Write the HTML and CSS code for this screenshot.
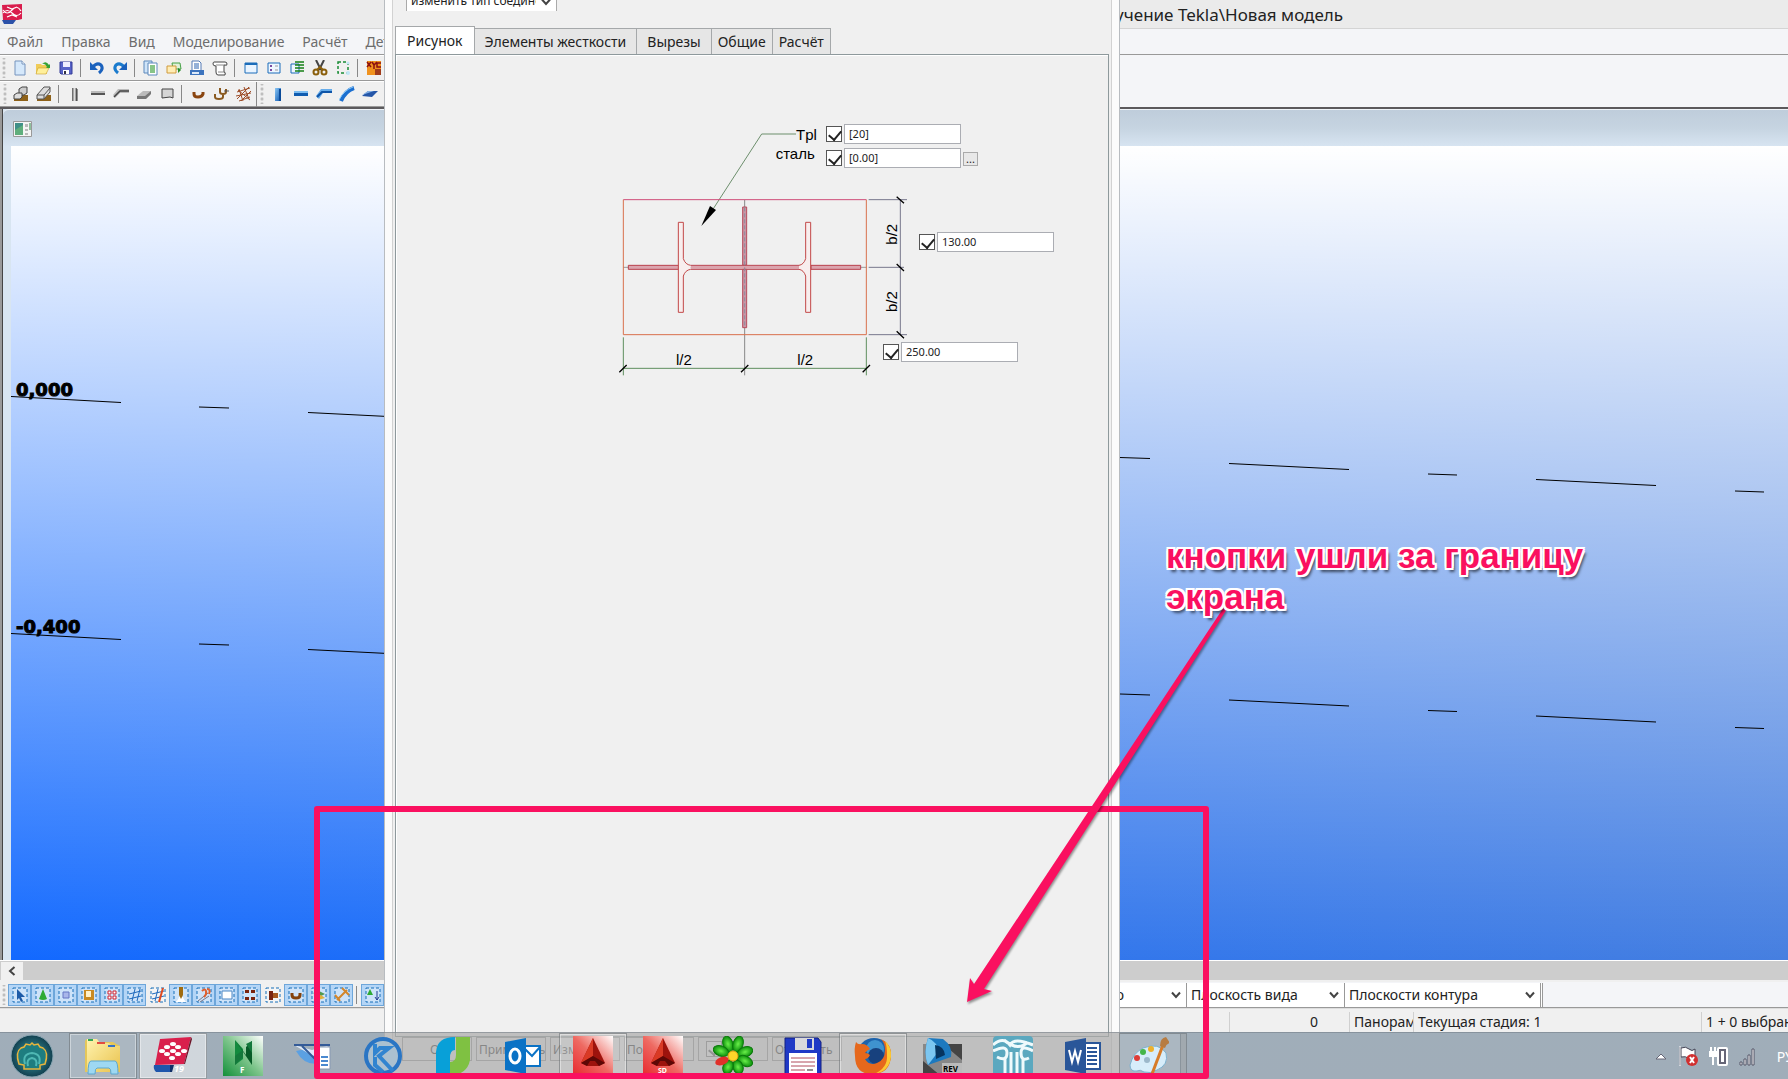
FILE: index.html
```html
<!DOCTYPE html>
<html lang="ru">
<head>
<meta charset="utf-8">
<title>Tekla Structures</title>
<link rel="stylesheet" href="styles.css">
</head>
<body>
<svg class="defs" aria-hidden="true">
  <defs>
    <linearGradient id="steel" x1="0" y1="0" x2="1" y2="0"><stop offset="0" stop-color="#555"/><stop offset=".5" stop-color="#ddd"/><stop offset="1" stop-color="#555"/></linearGradient>
    <linearGradient id="blue" x1="0" y1="0" x2="1" y2="1"><stop offset="0" stop-color="#8cc8f5"/><stop offset="1" stop-color="#0a55b0"/></linearGradient>
    <linearGradient id="red" x1="0" y1="1" x2="1" y2="0"><stop offset="0" stop-color="#e8282d"/><stop offset=".5" stop-color="#ee6a62"/><stop offset="1" stop-color="#fff"/></linearGradient>
    <linearGradient id="green" x1="0" y1="1" x2="1" y2="0"><stop offset="0" stop-color="#12903a"/><stop offset=".5" stop-color="#7cc48a"/><stop offset="1" stop-color="#fff"/></linearGradient>
    <linearGradient id="folder" x1="0" y1="0" x2="1" y2="1"><stop offset="0" stop-color="#fff3ae"/><stop offset="1" stop-color="#e9c24d"/></linearGradient>
    <radialGradient id="teal"><stop offset="0" stop-color="#3ba5ac"/><stop offset="1" stop-color="#123f4f"/></radialGradient>
    <radialGradient id="petal"><stop offset="0" stop-color="#6af04a"/><stop offset="1" stop-color="#0c8f0c"/></radialGradient>
    <symbol id="box" viewBox="0 0 16 16"><rect x="1" y="1" width="14" height="14" fill="#fff" fill-opacity=".35" stroke="#176eb8" stroke-dasharray="3 2"/></symbol>
    <symbol id="chev" viewBox="0 0 10 8"><path d="M1 1.500 5 6 9 1.500" fill="none" stroke="#444" stroke-width="2"/></symbol>
  </defs>
</svg>

<main class="app">
  <header class="titlebar">
    <svg class="logo" viewBox="0 0 20 20"><path d="M0 1 20 0v15l-4 1H1z" fill="#d91c4c"/><path d="M0 16h14l-3 4H2z" fill="#2b51a8"/><path d="M1 9q4-5 9 0t9 0M1 6q4 6 9 0t9 1M5 3l5 2 5-2M5 13l5-2 5 2" fill="none" stroke="#fff" stroke-width="1.200"/></svg>
    <h1>обучение Tekla\Новая модель</h1>
  </header>
  <nav class="menubar">
    <a href="#">Файл</a><a href="#">Правка</a><a href="#">Вид</a><a href="#">Моделирование</a><a href="#">Расчёт</a><a href="#">Детализация</a>
  </nav>

  <div class="toolbars">
    <div class="toolbar">
      <i class="grip"></i>
      <button aria-label="Новый"><svg viewBox="0 0 16 16"><path d="M3 1h7l3 3v11H3z" fill="#d5e8fb" stroke="#7794bd"/><path d="M10 1v3h3" fill="#fff" stroke="#7794bd"/></svg></button>
      <button aria-label="Открыть"><svg viewBox="0 0 16 16"><path d="M1 4h5l1 1h5v9H1z" fill="#f0cc58"/><path d="M3 8h11l-3 6H1z" fill="#fff09a" stroke="#caa030" stroke-width=".6"/><path d="M7 4q4-4 7 1l1-1v4h-4l1-1q-2-4-5-3z" fill="#35a135"/></svg></button>
      <button aria-label="Сохранить"><svg viewBox="0 0 16 16"><path d="M2 2h12v12H3l-1-1z" fill="#5763c8" stroke="#343d98"/><path d="M5 2h7v5H5z" fill="#eef"/><path d="M5 10h6v4H5z" fill="#fff"/><path d="M6 11h2v3H6z" fill="#334"/></svg></button>
      <i class="sep"></i>
      <button aria-label="Отменить"><svg viewBox="0 0 16 16"><path d="M4 7q4-5 8-2 3 4-2 8" fill="none" stroke="#1b62bd" stroke-width="3"/><path d="M1 2v8h8z" fill="#1b62bd"/></svg></button>
      <button aria-label="Вернуть"><svg viewBox="0 0 16 16"><path d="M12 7q-4-5-8-2-3 4 2 8" fill="none" stroke="#1b7bcd" stroke-width="3"/><path d="M15 2v8H7z" fill="#1b62bd"/></svg></button>
      <i class="sep"></i>
      <button aria-label="Отчёт"><svg viewBox="0 0 16 16"><path d="M1 1h8v12H1z" fill="#cfe4f8" stroke="#5d88bb"/><path d="M5 3h9v12H5z" fill="#fff" stroke="#5d88bb"/><path d="M7 6h5M7 8h5M7 10h5M7 12h5" stroke="#118a11"/></svg></button>
      <button aria-label="Файлы"><svg viewBox="0 0 16 16"><path d="M6 3h8l1 6H7z" fill="#dff0d8" stroke="#45a045"/><path d="M1 6h9v7H1z" fill="#ffedb5" stroke="#d09a3c"/><path d="M12 8l3 2-3 3" fill="#258a25"/></svg></button>
      <button aria-label="Печать"><svg viewBox="0 0 16 16"><path d="M3 1h7l2 2v8H3z" fill="#fff" stroke="#557bb5"/><path d="M5 4h5M5 6h5M5 8h5" stroke="#2b62b0"/><path d="M1 10h14v5H1z" fill="#3c73bd"/><path d="M3 12h7v2H3z" fill="#dce9f8"/></svg></button>
      <button aria-label="Чертёж"><svg viewBox="0 0 16 16"><path d="M2 2h11q2 0 2 2t-2 1h-1v7q2 0 1 3H6q-2 0-2-3V6Q1 6 1 4t1-2z" fill="#fff" stroke="#444"/><path d="M4 5h8M6 12h6" stroke="#888"/></svg></button>
      <i class="sep"></i>
      <button aria-label="Вид"><svg viewBox="0 0 16 16"><path d="M2 3h12v10H2z" fill="#e9f4ff" stroke="#1b6dba"/><path d="M2 3h12v2H2z" fill="#1b6dba"/></svg></button>
      <button aria-label="Свойства вида"><svg viewBox="0 0 16 16"><path d="M2 3h12v10H2z" fill="#eef6ff" stroke="#1b6dba"/><path d="M4 5h2v2H4zM4 9h2v2H4z" fill="#7a4ba0"/><path d="M9 6h3M9 10h3" stroke="#999"/></svg></button>
      <button aria-label="Список видов"><svg viewBox="0 0 16 16"><path d="M2 4h8v9H2z" fill="#eef6ff" stroke="#1b6dba"/><path d="M6 2h9M6 5h9M6 8h9M6 11h9" stroke="#168016" stroke-width="1.500"/></svg></button>
      <button aria-label="Вырезать"><svg viewBox="0 0 16 16"><path d="M4 0l5 10M12 0 7 10" stroke="#444" stroke-width="2"/><circle cx="4" cy="12" r="2.500" fill="none" stroke="#8a5f0c" stroke-width="2"/><circle cx="12" cy="12" r="2.500" fill="none" stroke="#8a5f0c" stroke-width="2"/><path d="M5 10l3-3 3 3" stroke="#8a5f0c" stroke-width="2" fill="none"/></svg></button>
      <button aria-label="Область"><svg viewBox="0 0 16 16"><rect x="3" y="2" width="10" height="11" fill="none" stroke="#198c35" stroke-width="1.500" stroke-dasharray="3 2"/><circle cx="13" cy="3" r="1.500" fill="#bfe6f5"/><circle cx="13" cy="13" r="2" fill="#bfe6f5"/></svg></button>
      <i class="sep"></i>
      <button aria-label="Координаты"><svg viewBox="0 0 16 16"><path d="M1 1h14v14H1z" fill="#f0921e"/><path d="M1 2l4 5M5 2 1 7M6 2l2 3 3-3M8 5v4M15 3h-4v4h4" stroke="#8c1010" stroke-width="1.500" fill="none"/><path d="M9 9h6v6H9z" fill="#a03c1c"/></svg></button>
    </div>
    <div class="toolbar second">
      <i class="grip"></i>
      <button aria-label="Фундамент"><svg viewBox="0 0 16 16"><path d="M1 9h14v6H1z" fill="#8e6118"/><path d="M6 3l3-2h5v6l-3 2H6z" fill="#ccc" stroke="#444"/><path d="M1 9l3-2h5v4l-2 2H1z" fill="#ddd" stroke="#444"/></svg></button>
      <button aria-label="Лента"><svg viewBox="0 0 16 16"><path d="M1 9h14v6H1z" fill="#8e6118"/><path d="M1 9 8 1h6v5l-6 7H1z" fill="#ddd" stroke="#555"/><path d="M1 9h7l6-7M8 9v4" fill="none" stroke="#555"/></svg></button>
      <i class="sep"></i>
      <button aria-label="Колонна"><svg viewBox="0 0 16 16"><path d="M5 2h5v13H5z" fill="url(#steel)"/><path d="M10 3v12" stroke="#333"/></svg></button>
      <button aria-label="Балка"><svg viewBox="0 0 16 16"><path d="M1 5h14v2H1z" fill="#bbb"/><path d="M1 7h14v2H1z" fill="#555"/></svg></button>
      <button aria-label="Составная балка"><svg viewBox="0 0 16 16"><path d="M0 9 5 3h11v4H7l-5 5" fill="#bbb"/><path d="M1 11l6-6h9" fill="none" stroke="#444" stroke-width="1.500"/></svg></button>
      <button aria-label="Плита"><svg viewBox="0 0 16 16"><path d="M1 10l6-5h8l-1 4-5 4H1z" fill="#bbb"/><path d="M1 10h8l6-5v3l-5 5H1z" fill="#777"/></svg></button>
      <button aria-label="Панель"><svg viewBox="0 0 16 16"><path d="M3 3h11v9l-3-1-8 1z" fill="#d5d5d5" stroke="#444"/></svg></button>
      <i class="sep"></i>
      <button aria-label="Арматура"><svg viewBox="0 0 16 16"><path d="M4 6v2q0 3 4 3t5-3V6" fill="none" stroke="#8a4510" stroke-width="3"/></svg></button>
      <button aria-label="Группа арматуры"><svg viewBox="0 0 16 16"><path d="M2 8v3q0 2 4 2t4-2V7M7 2v4q0 2 3 2t3-2V3" fill="none" stroke="#8a5a20" stroke-width="2"/><path d="M11 5h5" stroke="#555"/></svg></button>
      <button aria-label="Сетка"><svg viewBox="0 0 16 16"><path d="M1 6 14 2M0 10l15-3M3 15l11-4M3 3l4 12M8 1l5 12M13 1 1 13M15 5 5 15M2 4l12 10" stroke="#9d4d28" stroke-width="1"/></svg></button>
      <i class="sep wide"></i>
      <i class="grip"></i>
      <button aria-label="Стальная колонна"><svg viewBox="0 0 16 16"><path d="M5 2h6v13H5z" fill="url(#blue)"/><path d="M10 3v12" stroke="#0a4a98" stroke-width="2"/></svg></button>
      <button aria-label="Стальная балка"><svg viewBox="0 0 16 16"><path d="M1 5h14v2H1z" fill="#7cbcf0"/><path d="M1 7h14v3H1z" fill="#0f5cb0"/></svg></button>
      <button aria-label="Полибалка"><svg viewBox="0 0 16 16"><path d="M0 10 5 3h11v4H7l-4 6" fill="#66acea"/><path d="M1 11l5-5h10" fill="none" stroke="#0f55a8" stroke-width="2"/></svg></button>
      <button aria-label="Кривая балка"><svg viewBox="0 0 16 16"><path d="M2 15Q6 5 15 2" fill="none" stroke="#1b6fd0" stroke-width="4"/><path d="M0 14Q5 4 14 1" fill="none" stroke="#8dccf8"/></svg></button>
      <button aria-label="Пластина"><svg viewBox="0 0 16 16"><path d="M0 10l6-5h10l-6 6z" fill="#2456a8"/><path d="M0 9l6-4h6z" fill="#84b0e4"/></svg></button>
    </div>
  </div>

  <section class="mdi">
    <header class="viewhead">
      <svg class="viewicon" viewBox="0 0 19 16"><path d="M.5.5h18v15H.5z" fill="#f4f4f4" stroke="#999"/><path d="M2 2h8v12H2z" fill="#3f8f88"/><path d="M2 9l8-5v10H2z" fill="#5fae7c"/><path d="M12 3h3v3h-3zM12 8h3v2h-3zM12 12h3v2h-3z" fill="#b9b9b9"/><path d="M17 2v7" stroke="#2b8a46"/></svg>
    </header>
    <div class="viewport">
      <svg class="grid" viewBox="0 0 1777 815" preserveAspectRatio="xMinYMin slice">
        <g fill="none" stroke="#000">
          <path d="M0 250.500 110 256.500M188 261l30 1M297 266.500l120 6M1109 311.500l30 1M1218 317.500l120 6M1417 328l29 1M1525 333.500l120 6M1724 345l29 1"/>
          <path d="M0 487.500 110 493.500M188 498l30 1M297 503.500l120 6M1109 548l30 1M1218 554l120 6M1417 564.500l29 1M1525 570l120 6M1724 581.500l29 1"/>
        </g>
        <text x="5" y="250">0,000</text>
        <text x="5" y="487">-0,400</text>
      </svg>
    </div>
  </section>
  <div class="hscroll"><button aria-label="Влево"><svg viewBox="0 0 8 10"><path d="M6.500 1 2 5l4.500 4" fill="none" stroke="#444" stroke-width="2"/></svg></button></div>

  <div class="selectbar">
    <div class="switches">
      <i class="grip"></i>
      <button class="on" aria-label="Выбрать всё"><svg viewBox="0 0 16 16"><use href="#box"/><path d="M5 2l8 8H9l2 4-2 1-2-4-2 2z" fill="#1d5ba8"/></svg></button>
      <button class="on" aria-label="Компоненты"><svg viewBox="0 0 16 16"><use href="#box"/><path d="M8 2l4 10q-4 2-8 0z" fill="#2eaa35"/></svg></button>
      <button class="on" aria-label="Детали"><svg viewBox="0 0 16 16"><use href="#box"/><path d="M5 5h6v6H5z" fill="#a9b6ea" stroke="#6577c4"/></svg></button>
      <button class="on" aria-label="Поверхности"><svg viewBox="0 0 16 16"><use href="#box"/><path d="M3 3h10v10H3z" fill="#c98a22"/><path d="M5 4h5v6H5z" fill="#fff1c8"/></svg></button>
      <button class="on" aria-label="Точки"><svg viewBox="0 0 16 16"><use href="#box"/><path d="M4 4h3v3H4zM9 4h3v3H9zM4 9h3v3H4zM9 9h3v3H9z" fill="#fff" stroke="#d02030"/></svg></button>
      <button class="on" aria-label="Сетки"><svg viewBox="0 0 16 16"><use href="#box"/><path d="M2 7l12-3M2 12l12-3M5 14l3-12M10 14l3-12" stroke="#1d68bc"/></svg></button>
      <button aria-label="Линии сетки"><svg viewBox="0 0 16 16"><use href="#box"/><path d="M2 7l12-3M2 12l12-3M5 14l3-12" stroke="#1d68bc"/><path d="M9 15l4-14" stroke="#e04a20" stroke-width="2"/></svg></button>
      <button class="on" aria-label="Сварные швы"><svg viewBox="0 0 16 16"><use href="#box"/><path d="M2 15q3-1 4-5h4q1 4 4 5z" fill="#fff"/><path d="M6 0h4v8l-2 4-2-4z" fill="#a06c10"/></svg></button>
      <button class="on" aria-label="Разрезы"><svg viewBox="0 0 16 16"><use href="#box"/><path d="M2 14 12 6M4 15l9-6" stroke="#778"/><path d="M6 4q3-3 4 0t-2 6M11 2q4 0 2 5" stroke="#e06030" stroke-width="2" fill="none"/></svg></button>
      <button class="on" aria-label="Виды"><svg viewBox="0 0 16 16"><use href="#box"/><path d="M3 4h10v8H3z" fill="#fff" stroke="#4d87c4"/></svg></button>
      <button class="on" aria-label="Группы болтов"><svg viewBox="0 0 16 16"><use href="#box"/><path d="M3 3h4v3H3zM9 3h4v3H9zM3 10h4v3H3zM9 10h4v3H9z" fill="#7a2410"/></svg></button>
      <button aria-label="Болты"><svg viewBox="0 0 16 16"><use href="#box"/><path d="M4 4h4v9H4z" fill="#7a2410"/><path d="M8 6h5v5H8z" fill="#a85a20"/></svg></button>
      <button class="on" aria-label="Стержни"><svg viewBox="0 0 16 16"><use href="#box"/><path d="M4 6v2q0 3 4 3t4-3V6" fill="none" stroke="#84420c" stroke-width="3"/></svg></button>
      <button class="on" aria-label="Плоскости"><svg viewBox="0 0 16 16"><use href="#box"/><path d="M2 6l6-2 6 3-6 3z" fill="#4f9a52"/><path d="M3 10l7-2 4 3-7 2z" fill="#e0b03c"/></svg></button>
      <button class="on" aria-label="Расстояния"><svg viewBox="0 0 16 16"><use href="#box"/><path d="M3 13 13 3M8 1l7 7M1 8l5 6" stroke="#d2862c" stroke-width="2"/></svg></button>
      <i class="sep"></i>
      <button class="on" aria-label="Сборки"><svg viewBox="0 0 16 16"><use href="#box"/><path d="M5 2l3 6H2z" fill="#2eaa35"/><path d="M12 4v9M10 10l2 3 2-3" stroke="#233c90" fill="none"/></svg></button>
    </div>
    <label class="drop w1"><select aria-label="Авто"><option>Рабочая плоскость: авто</option></select><svg><use href="#chev"/></svg></label>
    <label class="drop w2"><select aria-label="Плоскость"><option>Плоскость вида</option></select><svg><use href="#chev"/></svg></label>
    <label class="drop w3"><select aria-label="Контур"><option>Плоскости контура</option></select><svg><use href="#chev"/></svg></label>
  </div>
  <footer class="status">
    <span class="s0"></span><span class="s1">0</span><span class="s2">Панорамирование</span><span class="s3">Текущая стадия: 1</span><span class="s4">1 + 0 выбрано</span>
  </footer>
</main>

<section class="dialog">
  <div class="inner">
    <label class="kind"><select aria-label="Тип соединения"><option>изменить тип соединения</option></select><svg><use href="#chev"/></svg></label>
    <div class="tabs">
      <button class="tab active">Рисунок</button><button class="tab">Элементы жесткости</button><button class="tab">Вырезы</button><button class="tab">Общие</button><button class="tab">Расчёт</button>
    </div>
    <div class="panel">
      <svg class="drawing" viewBox="0 0 1440 840">
        <g fill="none" stroke-width="3">
          <path d="M588 72H485L340 296" stroke="#6d8f6d"/>
          <path d="M304 348 330 288 348 300z" fill="#000" stroke="none"/>
          <path d="M434 270V796" stroke="#888"/>
          <path d="M70 472H800" stroke="#999" stroke-dasharray="30 9"/>
          <path d="M85 466H236V478H85zM633 466H782V478H633z" fill="#dba4ae" stroke="#b8404c"/>
          <path d="M272 472H597" stroke="#dba4ae" stroke-width="9"/>
          <path d="M272 466H597M272 478H597" stroke="#b8404c"/>
          <path d="M428 291H440V465H428zM428 478H440V653H428z" fill="#c996a5" stroke="#b84c5c"/>
          <path d="M434 292V652" stroke="#8c8c9c" stroke-dasharray="12 6"/>
          <path d="M272 466Q256 464 250 446V337H235V607H250V498Q256 480 272 478M597 466Q611 464 617 446V337H632V607H617V498Q611 480 597 478" stroke="#c24848" fill="#f8eeee"/>
          <path d="M70 269H799" stroke="#cf4c78"/><path d="M70 269V674H799V269" stroke="#d8704c"/>
          <path d="M70 682V796M799 682V796M70 775H799" stroke="#5e8f5e"/>
          <path d="M806 269H921M806 472H912M806 674H921M901 269V674" stroke="#77778c"/>
          <path d="M58 787 80 765M423 787 445 765M788 787 810 765M890 260 912 280M890 462 912 483M890 664 912 685" stroke="#000" stroke-width="4"/>
        </g>
        <g class="marks">
          <text x="588" y="90">Tpl</text><text x="527" y="147">сталь</text>
          <text x="228" y="765">l/2</text><text x="592" y="765">l/2</text>
          <text transform="translate(892 404) rotate(-90)">b/2</text><text transform="translate(892 606) rotate(-90)">b/2</text>
        </g>
      </svg>
      <div class="field f1"><input type="checkbox" checked aria-label="Толщина"><input type="text" value="[20]" aria-label="Tpl"></div>
      <div class="field f2"><input type="checkbox" checked aria-label="Материал"><input type="text" value="[0.00]" aria-label="сталь"><button class="more">...</button></div>
      <div class="field f3"><input type="checkbox" checked aria-label="Ширина"><input type="text" value="130.00" aria-label="b"></div>
      <div class="field f4"><input type="checkbox" checked aria-label="Длина"><input type="text" value="250.00" aria-label="l"></div>
    </div>
    <div class="actions">
      <button class="ok">Ok</button><button>Применить</button><button>Изменить</button><button>Получить</button><label class="toggle"><input type="checkbox" checked aria-label="Вкл"></label><button>Отменить</button>
    </div>
  </div>
</section>

<footer class="taskbar">
  <button class="start" aria-label="Пуск"><svg viewBox="0 0 44 44"><circle cx="22" cy="22" r="21" fill="url(#teal)" stroke="#87a5b2"/><path d="M14 35v-4l-5-1q-4-12 2-16l3-1 2-3 4 1 2-2 2 2 4-1 2 3 3 1q6 4 2 16l-5 1v4z" fill="#1e7d80" stroke="#e8b43c" stroke-width="1.500"/><path d="M15 30q-3-10 7-11 10 1 7 11M18 32q-2-7 4-8 6 1 4 8" stroke="#4fb8b4" stroke-width="2" fill="none"/></svg></button>
  <button class="run" aria-label="Проводник"><svg viewBox="0 0 40 40"><path d="M2 6q0-3 3-3h8l2 3h15l7 4v26H2z" fill="#e5c75a"/><path d="M4 3h10l3 4h9l3 3h8v26H4z" fill="url(#folder)"/><path d="M5 3h5v2H5z" fill="#36a852"/><path d="M14 6h8v2h-8z" fill="#e34b40"/><path d="M25 9h7v2h-7z" fill="#3672c8"/><path d="M5 38q0-13 3-13h24q3 0 3 13h-7q0-6-2-6H14q-2 0-2 6z" fill="#9ed8f2" stroke="#5ca8d0"/></svg></button>
  <button class="run current" aria-label="Tekla"><svg viewBox="0 0 40 40"><path d="M7 3 38 1 31 28 2 29z" fill="#d91f4c"/><path d="M38 1l1 2-7 25-1 0z" fill="#6b1226"/><path d="M1 29h18l-2 7H3q-3-3-2-7z" fill="#1f56ac"/><path d="M17 29h4l-2 7h-2z" fill="#102f68"/><g fill="#fff"><ellipse cx="20" cy="8" rx="3" ry="2"/><ellipse cx="14" cy="11" rx="3" ry="2"/><ellipse cx="25" cy="11" rx="3" ry="2"/><ellipse cx="9" cy="15" rx="3" ry="2"/><ellipse cx="20" cy="15" rx="3" ry="2"/><ellipse cx="31" cy="15" rx="3" ry="2"/><ellipse cx="14" cy="18" rx="3" ry="2"/><ellipse cx="25" cy="18" rx="3" ry="2"/><ellipse cx="19" cy="22" rx="3" ry="2"/></g><text x="21" y="36" class="badge">19</text></svg></button>
  <button aria-label="F"><svg viewBox="0 0 40 40"><path d="M0 0h40v40H0z" fill="url(#green)"/><path d="M12 4v25l8-6V13z" fill="#138a3e"/><path d="M12 4l17 25V5l-6 6v8z" fill="#075b27"/><path d="M12 29l8-8v-7l-8 6zM23 8l6 9V5z" fill="#14783b"/><text x="17" y="37" class="badge small">F</text></svg></button>
  <button aria-label="Сканер"><svg viewBox="0 0 40 40"><path d="M3 15q11-3 17 3 6 6 13 4l-5 5Q12 31 3 15z" fill="#5ba0e2"/><path d="M1 9l18 5 18-5-17 11z" fill="#dfeafa"/><path d="M1 9h36M9 10l14 14" stroke="#345b98" stroke-width="2" fill="none"/><path d="M25 11h12v22H25z" fill="#fff" stroke="#8899b4"/><path d="M28 21h7M28 25h7M28 29h7" stroke="#4a89d0" stroke-width="2"/></svg></button>
  <button aria-label="Компас"><svg viewBox="0 0 40 40"><circle cx="20" cy="20" r="17" fill="#abc0d0" stroke="#2a75c4" stroke-width="4"/><path d="M12 8v9l5-5h9L16 20l14 15M12 21v8l8 7" fill="none" stroke="#3184d0" stroke-width="4"/></svg></button>
  <button aria-label="Нано"><svg viewBox="0 0 40 40"><path d="M3 40V16Q4 1 22 1v13q-5 0-5 8v18z" fill="#08a0d8"/><path d="M23 1h14v23Q34 39 17 39V26q6 0 6-7z" fill="#7fc142"/></svg></button>
  <button aria-label="Outlook"><svg viewBox="0 0 40 40"><path d="M20 10h17v20H20z" fill="#fff" stroke="#0a72c5" stroke-width="2"/><path d="M20 11l9 9 8-9" fill="none" stroke="#0a72c5" stroke-width="2"/><path d="M2 6 23 2v36L2 34z" fill="#0a72c5"/><ellipse cx="12" cy="20" rx="5" ry="7" fill="none" stroke="#fff" stroke-width="3"/></svg></button>
  <button class="run" aria-label="AutoCAD"><svg viewBox="0 0 40 40"><path d="M0 0h40v40H0z" fill="url(#red)"/><path d="M20 2 32 27l-6 3H14l-6-3z" fill="#9d130d"/><path d="M20 2 8 27l12-7z" fill="#d93a25"/><path d="M20 20l12 7-6 3-4-5h-5l-3 5-6-3z" fill="#5d0806"/></svg></button>
  <button aria-label="AutoCAD SD"><svg viewBox="0 0 40 40"><path d="M0 0h40v40H0z" fill="url(#red)"/><path d="M20 2 32 27l-6 3H14l-6-3z" fill="#9d130d"/><path d="M20 2 8 27l12-7z" fill="#d93a25"/><path d="M20 20l12 7-6 3-4-5h-5l-3 5-6-3z" fill="#5d0806"/><text x="15" y="37" class="badge tiny">SD</text></svg></button>
  <button aria-label="ICQ"><svg viewBox="0 0 40 40"><g fill="url(#petal)" stroke="#0b7a0b"><ellipse cx="15" cy="8" rx="5" ry="8" transform="rotate(-18 15 8)"/><ellipse cx="25" cy="8" rx="5" ry="8" transform="rotate(18 25 8)"/><ellipse cx="32" cy="16" rx="8" ry="5" transform="rotate(-20 32 16)"/><ellipse cx="32" cy="25" rx="8" ry="5" transform="rotate(25 32 25)"/><ellipse cx="25" cy="31" rx="5" ry="7" transform="rotate(-20 25 31)"/><ellipse cx="15" cy="31" rx="5" ry="7" transform="rotate(20 15 31)"/><ellipse cx="8" cy="15" rx="8" ry="5" transform="rotate(20 8 15)"/></g><ellipse cx="9" cy="25" rx="7" ry="4" fill="#e0302a" transform="rotate(-20 9 25)"/><circle cx="20" cy="20" r="5" fill="#ffd52a" stroke="#d8a010"/></svg></button>
  <button aria-label="Total Commander"><svg viewBox="0 0 40 40"><path d="M2 2h33l3 4v33H2z" fill="#1f39c6" stroke="#122080"/><path d="M12 2h19v12H12z" fill="#d8d8dc"/><path d="M24 3h5v9h-5z" fill="#1f39c6"/><path d="M6 17h28v23H6z" fill="#fff"/><path d="M8 22h24M8 26h24M8 30h24M8 34h14" stroke="#b04a5a"/><path d="M24 34h6" stroke="#222"/></svg></button>
  <button class="run" aria-label="Firefox"><svg viewBox="0 0 40 40"><circle cx="21" cy="19" r="17" fill="#1d63ac"/><circle cx="22" cy="13" r="9" fill="#3f93cf"/><circle cx="23" cy="20" r="8" fill="#17417e"/><path d="M3 6q2 3 6 2 5 0 8 5-3 1-5 4 3 0 5 2-2 4-5 4 4 7 12 4 8-3 8-13 0-7-4-11 11 5 10 17-1 18-19 18Q2 38 2 20 1 12 3 6z" fill="#e6681c"/><path d="M32 5q7 6 6 16-2 15-17 17 14-6 13-19 0-9-2-14z" fill="#fbc933"/></svg></button>
  <button aria-label="DraftSight"><svg viewBox="0 0 40 40"><path d="M0 8h39v32H0z" fill="#888"/><path d="M0 25 18 40H0zM20 8h19v16z" fill="#444"/><path d="M5 2 20 3q10 7 8 18L5 29q-5-12 0-27z" fill="#1c79bf"/><path d="M5 2q10 4 10 14L5 29q-5-12 0-27z" fill="#7cc6f0"/><path d="M12 9q9 1 10 10l-9 4z" fill="#07345f"/><path d="M19 27h20v13H19z" fill="#bbb"/><text x="20" y="36" class="badge dark">REV</text></svg></button>
  <button aria-label="Архитектура"><svg viewBox="0 0 40 40"><rect width="40" height="40" rx="4" fill="#5ba8bf"/><path d="M0 9q10-9 17 0 4-8 23 0M0 15q14-7 14 2T4 21M40 15q-12-7-12 2t8 5M12 22v18M18 16v24M24 16v24M30 22v18M11 4q14 12 24 2" fill="none" stroke="#effafc" stroke-width="3"/></svg></button>
  <button aria-label="Word"><svg viewBox="0 0 40 40"><path d="M20 7h17v26H20z" fill="#fff" stroke="#2a5699" stroke-width="2"/><path d="M24 12h10M24 16h10M24 20h10M24 24h10M24 28h10" stroke="#2a5699" stroke-width="2"/><path d="M2 6 23 2v36L2 34z" fill="#2a5699"/><path d="M6 14l3 12 3-11 3 11 3-12" fill="none" stroke="#fff" stroke-width="2"/></svg></button>
  <button class="run stack" aria-label="Paint"><svg viewBox="0 0 40 40"><path d="M14 12q16-6 23 5 3 12-9 17-7 4-13 2-4-3-7-1-7 1-7-6 3-12 13-17z" fill="#d7edfa" stroke="#7db2cf"/><circle cx="8" cy="22" r="3" fill="#dd3c38"/><circle cx="14" cy="16" r="3" fill="#45b649"/><circle cx="22" cy="13" r="3" fill="#eeb12c"/><circle cx="18" cy="24" r="3" fill="#9cb8cb"/><path d="M34 9 23 38" stroke="#d77c28" stroke-width="3"/><path d="M31 10q0-8 6-9l4 6q-4 1-5 5z" fill="#b77c42"/></svg></button>
  <div class="tray">
    <svg width="12" height="20" viewBox="0 0 12 20"><path d="M1 13 6 8l5 5z" fill="#fff" stroke="#667"/></svg>
    <svg width="20" height="22" viewBox="0 0 20 22"><path d="M2 2v18M3 3q5-2 8 1t6 0v9q-5 2-7 0t-7-1z" fill="#fff" stroke="#445"/><path d="M2 1v20" stroke="#fff"/><circle cx="14" cy="15" r="6" fill="#d13030"/><path d="M12 12l4 6M16 12l-4 6" stroke="#fff" stroke-width="2"/></svg>
    <svg width="19" height="22" viewBox="0 0 19 22"><rect x="9" y="3" width="9" height="17" rx="1" fill="#667" stroke="#fff" stroke-width="2"/><path d="M12 6h3v11h-3z" fill="#fff"/><path d="M2 2v4M6 2v4M1 7h6v4H1zM4 11v9" stroke="#fff" stroke-width="2" fill="#fff"/></svg>
    <svg width="18" height="22" viewBox="0 0 18 22"><path d="M1 17h2v3H1zM5 14h2v6H5zM9 10h2v10H9zM13 4h2v16h-2z" fill="#fff" stroke="#556"/></svg>
    <span class="lang">РУС</span>
  </div>
</footer>

<div class="frame"></div>
<svg class="arrow" viewBox="0 0 270 400"><path d="M262 8 12 385 8 379 5 403 30 392 22 390 265 10z" fill="#fa1060"/></svg>
<p class="note">кнопки ушли за границу<br>экрана</p>
</body>
</html>
```

FILE: styles.css
```css
* { box-sizing: border-box; }

html, body { height: 100%; }

body {
  margin: 0;
  position: relative;
  display: flex;
  flex-direction: column;
  overflow: hidden;
  background: linear-gradient(#95c4e6, #89b6dc);
  font-family: "Noto Sans", sans-serif;
  font-size: 14px;
  color: #222;
}

button, input, select { font: inherit; color: inherit; margin: 0; padding: 0; }
button { border: 0; background: none; }
a { color: inherit; text-decoration: none; }
svg { display: block; }
.defs { position: absolute; width: 0; height: 0; }

/* Main window */
.app { flex: 1; min-height: 0; display: flex; flex-direction: column; background: #f4f5f8; }

.titlebar { display: flex; align-items: center; height: 29px; padding-left: 2px; background: #ebebeb; border-bottom: 1px solid #d4d4d4; }
.logo { width: 20px; height: 20px; }
.titlebar h1 { margin: 0 445px 0 auto; padding-top: 2px; font-size: 17px; line-height: 28px; font-weight: 400; }

.menubar { display: flex; align-items: center; gap: 18px; height: 26px; padding-left: 7px; border-bottom: 1px solid #999; font-size: 14px; color: #6d6d6d; }

.toolbars { width: 400px; background: #f0f0f0; }
.toolbar { display: flex; align-items: center; height: 26px; border-bottom: 1px solid #999; border-top: 1px solid #fff; }
.toolbar.second { padding-left: 1px; }
.toolbar button, .switches button { flex: none; display: grid; place-items: center; width: 23px; height: 22px; }
.toolbar svg, .switches svg { width: 16px; height: 16px; }
.grip { flex: none; width: 8px; height: 20px; background: radial-gradient(circle, #bbb 1px, transparent 2px) center / 4px 5px repeat-y; }
.sep { flex: none; width: 8px; height: 18px; background: linear-gradient(#888, #888) 3px 0 / 1px 100% no-repeat; }
.sep.wide { width: 3px; height: 25px; background-position: 1px 0; }

.mdi { flex: 1; min-height: 0; display: flex; flex-direction: column; padding-left: 3px; border-top: 2px solid #5b595c; background: linear-gradient(90deg, #999 2px, #444 2px, #444 3px, #d8e5f1 3px); }
.viewhead { display: flex; align-items: center; height: 37px; padding: 2px 0 0 10px; border-top: 1px solid #eef3f8; border-top-left-radius: 6px; background: linear-gradient(#bfcddb, #c6d4e1 50%, #d7e4f1); }
.viewicon { width: 19px; height: 16px; }
.viewport { flex: 1; min-height: 0; margin-left: 8px; overflow: hidden; background: linear-gradient(#fff, rgba(255, 255, 255, 0)), linear-gradient(90deg, #1269ff, #467fe0); }
.grid { width: 100%; height: 100%; }
.grid text { font: bold 18px "DejaVu Sans", sans-serif; stroke: #000; stroke-width: 1px; }

.hscroll { height: 22px; padding: 1px 0 2px 1px; background: #cdcdcd; border-top: 1px solid #fff; border-bottom: 2px solid #f0f0f0; }
.hscroll button { display: grid; place-items: center; width: 22px; height: 18px; background: #f0f0f0; }
.hscroll svg { width: 8px; height: 10px; }

.selectbar { display: flex; align-items: center; height: 26px; border-bottom: 1px solid #999; }
.switches { flex: none; display: flex; align-items: center; width: 1020px; height: 25px; background: #f0f0f0; }
.switches button.on { background: #b4d5f6; border: 1px solid #6da6da; }
.drop { position: relative; flex: none; height: 24px; border-right: 1px solid #999; background: #fff; }
.drop select, .kind select { appearance: none; width: 100%; height: 100%; border: 0; background: #fff; }
.drop select { padding-left: 4px; font-size: 14px; }
.drop svg { position: absolute; right: 5px; top: 8px; width: 10px; height: 8px; pointer-events: none; }
.w1 { width: 167px; }
.w1 select { direction: rtl; padding-right: 62px; }
.w2 { width: 158px; }
.w3 { width: 198px; border-right: 3px double #999; }

.status { display: flex; align-items: center; height: 24px; padding-top: 2px; background: #f0f0f0; border-top: 1px solid #ddd; line-height: 20px; }
.status span { flex: none; height: 20px; padding-left: 4px; border-right: 1px solid #d0d0d0; white-space: nowrap; overflow: hidden; }
.status .s0 { width: 1230px; }
.status .s1 { width: 120px; padding-right: 31px; text-align: right; }
.status .s2 { width: 64px; }
.status .s3 { width: 288px; }
.status .s4 { flex: 1; border: 0; }

/* Connection dialog, its top and bottom beyond the screen edges */
.dialog { position: absolute; left: 384px; top: -12px; bottom: 0; width: 736px; display: flex; padding: 0 7px; border: 1px solid #b8bcc0; background: #fbfbfb; }
.inner { flex: 1; display: flex; flex-direction: column; padding: 0 2px; border: 1px solid #d2d2d2; border-top: 0; background: #f0f0f0; }
.kind { position: relative; width: 151px; height: 22px; margin: 0 0 15px 11px; border: 1px solid #aaa; }
.kind select { padding: 0 20px 0 4px; font-size: 12px; }
.kind svg { position: absolute; right: 5px; top: 8px; width: 10px; height: 8px; pointer-events: none; }
.tabs { display: flex; align-items: flex-end; height: 28px; }
.tab { height: 26px; padding: 0 10px; border: 1px solid #a5a8aa; border-width: 1px 1px 0 0; background: #e6e6e6; font-size: 14px; white-space: nowrap; }
.tab:nth-child(n+4) { padding: 0 6px; }
.tab.active { height: 28px; border-left-width: 1px; padding: 0 11px; background: #fff; }
.panel { position: relative; flex: 1; border: 1px solid #8e999c; box-shadow: inset 1px 1px #fff; }

.drawing { position: absolute; left: 204px; top: 55px; width: 480px; height: 280px; }
.marks { font: 45px "Liberation Sans", sans-serif; }
.field { position: absolute; display: flex; align-items: center; gap: 2px; }
.f1 { left: 430px; top: 69px; }
.f2 { left: 430px; top: 93px; }
.f3 { left: 523px; top: 177px; }
.f4 { left: 487px; top: 287px; }
.field input[type="text"] { width: 117px; height: 20px; padding: 0 4px 2px; border: 1px solid #abadb3; background: #fff; font-size: 11px; }
input[type="checkbox"] { appearance: none; flex: none; width: 16px; height: 16px; border: 1px solid #555; background: #fff; }
input[type="checkbox"]:checked::before { content: ""; display: block; width: 6px; height: 10px; margin: 1px 0 0 4px; border: solid #222; border-width: 0 2px 2px 0; transform: rotate(40deg); }
.more { align-self: flex-end; width: 15px; height: 14px; margin-bottom: 2px; border: 1px solid #aaa; background: #e8e8e8; font-size: 11px; line-height: 10px; }

.actions { display: flex; gap: 4px; height: 40px; padding-left: 7px; }
.actions button, .toggle { width: 70px; height: 24px; padding-left: 2px; border: 1px solid #999; font-size: 12px; text-align: left; color: #333; overflow: hidden; }
.actions .ok { text-align: center; }
.toggle { padding: 3px 7px; }
.toggle input { opacity: .7; }

/* Taskbar */
.taskbar { position: relative; display: flex; gap: 2px; height: 47px; border-top: 1px solid rgba(110, 120, 130, .5); background: rgba(170, 170, 170, .7); }
.taskbar button { flex: none; width: 68px; height: 46px; display: grid; place-items: center; }
.taskbar button svg { width: 40px; height: 40px; }
.taskbar .start { width: 67px; padding-right: 3px; }
.taskbar .start svg { width: 44px; height: 44px; }
.taskbar .run { border: 1px solid rgba(90, 95, 100, .5); box-shadow: inset 0 0 0 1px rgba(255, 255, 255, .4); background: rgba(255, 255, 255, .12); }
.taskbar .current { background: rgba(255, 255, 255, .5); }
.taskbar .stack { padding-right: 8px; box-shadow: inset -5px 0 rgba(255, 255, 255, .2), inset -6px 0 rgba(90, 95, 100, .4); }
.badge { font: italic bold 9px "Noto Sans", sans-serif; fill: #fff; }
.small { font-style: normal; font-size: 8px; }
.tiny { font-style: normal; font-size: 7px; }
.dark { font-style: normal; font-size: 8px; fill: #000; }
.tray { display: flex; align-items: center; gap: 11px; margin: 0 -14px 0 auto; color: #fff; font-size: 14px; }
.lang { margin-left: 9px; }

/* Markup drawn over the screen */
.frame { position: absolute; left: 314px; top: 806px; bottom: 0; width: 895px; border: 6px solid #fa1060; border-radius: 3px; }
.arrow { position: absolute; left: 962px; top: 599px; width: 270px; height: 400px; overflow: visible; filter: drop-shadow(1px 2px 1px rgba(0, 0, 0, .4)); }
.note {
  position: absolute; left: 1166px; top: 535px; margin: 0;
  font: bold 35px/41px "Liberation Sans", sans-serif; color: #fa1060; white-space: nowrap;
  text-shadow: 2px 0 #fff, -2px 0 #fff, 0 2px #fff, 0 -2px #fff, 2px 2px #fff, -2px 2px #fff, 2px -2px #fff, -2px -2px #fff, 3px 4px 3px rgba(0, 0, 0, .6);
}
```
